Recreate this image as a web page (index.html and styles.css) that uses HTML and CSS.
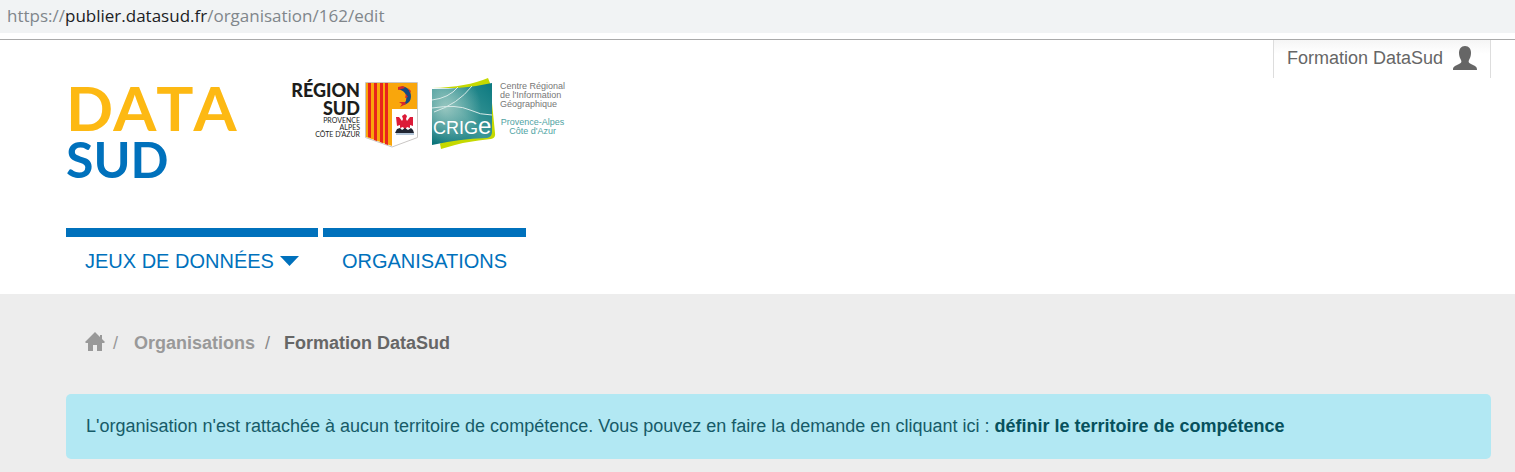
FILE: index.html
```html
<!DOCTYPE html>
<html lang="fr">
<head>
<meta charset="utf-8">
<meta name="viewport" content="width=device-width, initial-scale=1">
<title>Formation DataSud</title>
<link rel="stylesheet" href="styles.css">
</head>
<body>
<div class="address-bar"><span>https://</span><span class="address-host">publier.datasud.fr</span><span>/organisation/162/edit</span></div>
<header class="site-header">
  <div class="header-top">
    <div class="brands">
      <a class="datasud" href="#"><span class="datasud-data">DATA</span><span class="datasud-sud">SUD</span></a>
      <a class="region" href="#">
        <span class="region-text">
          <span class="region-name">RÉGION</span>
          <span class="region-name">SUD</span>
          <span class="region-place">PROVENCE</span>
          <span class="region-place">ALPES</span>
          <span class="region-place">CÔTE D'AZUR</span>
        </span>
        <svg class="shield" viewBox="0 0 53 66" width="53" height="66" aria-hidden="true">
          <path d="M.5.5h52v55L27 65 .5 55.500z" fill="#fff" stroke="#c9c6c4"/>
          <path d="M1 1h51v26H27v37L1 55z" fill="#f9a60c"/>
          <path d="M3 1h3v55l-3-1zM9 1h3v58l-3-1zM15 1h3v60l-3-1zM20 1h3v62l-3-1z" fill="#e8241c"/>
          <path d="M33 7c3-4 8-3 11 1 4 6 2 14-6 15 3-3 4-6 3-10-1-3-4-5-8-6z" fill="#154a83"/>
          <path d="M33 5l5-1 2 2-7 2zM43 6l3 3-1 2zM40 20l-6 0 3 2-2 3 6-3zM41 12l2 3-3 1z" fill="#d8292b"/>
          <path d="M31 35l3 0 3 4 1-2-1-3 3-2 2 2-1 3 1 2 3-4 3 0v9l-3-1 0 3-3-1-2 3-2-3-3 1 0-3-3 1z" fill="#dc1a37"/>
          <path d="M30 51l2-4 3-1 2 2 3-2 3 2 3-2 2 2 1 3z" fill="#202532"/>
          <path d="M31 52h18" stroke="#668bb0"/>
        </svg>
      </a>
      <a class="crige" href="#">
        <svg class="crige-mark" viewBox="0 0 66 72" width="66" height="72" aria-hidden="true">
          <defs>
            <linearGradient id="teal" x1="1" y1="0" x2="0" y2="1">
              <stop offset="0" stop-color="#0b7980"/><stop offset=".5" stop-color="#3d9797"/><stop offset="1" stop-color="#087278"/>
            </linearGradient>
            <radialGradient id="shine" cx=".22" cy=".4" r=".6">
              <stop offset="0" stop-color="#b8d8cf" stop-opacity=".75"/><stop offset="1" stop-color="#b8d8cf" stop-opacity="0"/>
            </radialGradient>
          </defs>
          <path d="M1 10Q36 9 57 0L59 5 64 55Q65 60 60 61 35 63 10 71L9 66 50 10z" fill="#c5d900"/>
          <path d="M1 11Q34 11 61 5V54Q61 59 56 60 27 61 1 67z" fill="url(#teal)"/>
          <path d="M1 11Q34 11 61 5V54Q61 59 56 60 27 61 1 67z" fill="url(#shine)"/>
          <path d="M1 22Q18 20 27 9M3 34Q27 26 41 8M1 30Q26 26 39 32 49 37 61 37" fill="none" stroke="#d7eae8" stroke-width="1"/>
          <text class="crige-name" x="2" y="56">CRIG<tspan class="crige-e">e</tspan></text>
        </svg>
        <span class="crige-text">
          <span>Centre Régional</span>
          <span>de l'Information</span>
          <span>Géographique</span>
          <span class="crige-place crige-first">Provence-Alpes</span>
          <span class="crige-place">Côte d'Azur</span>
        </span>
      </a>
    </div>
    <a class="account" href="#">Formation DataSud
      <svg viewBox="0 0 24 24" width="24" height="24" aria-hidden="true"><path d="M12 0C8 0 6 3 6 7c0 3 1 5 2 7 1 2 0 3-2 4l-4 2c-1 1-2 1-2 4h24c0-3-1-3-2-4l-4-2c-2-1-3-2-2-4 1-2 2-4 2-7 0-4-2-7-6-7z" fill="#666"/></svg>
    </a>
  </div>
  <nav class="main-nav">
    <button class="tab" type="button">JEUX DE DONNÉES <svg viewBox="0 0 19 10" width="19" height="10" aria-hidden="true"><path d="M0 0h19l-9.500 10z" fill="#0071bc"/></svg></button>
    <a class="tab" href="#">ORGANISATIONS</a>
  </nav>
</header>
<main class="content">
  <nav aria-label="Fil d'Ariane">
    <ol class="breadcrumb">
      <li><a class="home" href="#" aria-label="Accueil"><svg viewBox="0 0 20 19" width="20" height="19" aria-hidden="true"><path d="M10 0l5 5V3h2v4l3 3-1 1h-2v8h-5v-6H8v6H3v-8H1l-1-1z" fill="#999"/></svg></a></li>
      <li><a href="#">Organisations</a></li>
      <li class="current">Formation DataSud</li>
    </ol>
  </nav>
  <div class="alert">L'organisation n'est rattachée à aucun territoire de compétence. Vous pouvez en faire la demande en cliquant ici : <a href="#">définir le territoire de compétence</a></div>
</main>
</body>
</html>
```
FILE: styles.css
```css
* { box-sizing: border-box; }
body {
  margin: 0;
  min-height: 100vh;
  display: flex;
  flex-direction: column;
  background: #fff;
  color: #666;
  font: 18px/24px "Liberation Sans", Arial, sans-serif;
}
a { color: inherit; text-decoration: none; }
svg { flex: none; }
.address-bar {
  padding: 4px 7px 5px;
  background: #f1f3f4;
  color: #80868b;
  font-family: "Open Sans", "Noto Sans", sans-serif;
  font-size: 17px;
}
.address-host { color: #202124; }
.site-header {
  margin-top: 6px;
  padding: 0 24px 0 66px;
  border-top: 1px solid #aaa;
}
.header-top {
  display: flex;
  justify-content: space-between;
  align-items: flex-start;
  min-height: 188px;
}
.brands { display: flex; align-items: flex-start; padding-top: 38px; }
.datasud {
  display: flex;
  flex-direction: column;
  width: 224px;
  padding-top: 2px;
  font-family: Lato, sans-serif;
  font-weight: 700;
  font-kerning: none;
}
.datasud-data { color: #fdb913; font-size: 62px; line-height: 54px; }
.datasud-sud { color: #0071bc; font-size: 50px; line-height: 50px; }
.region { display: flex; gap: 5px; padding-top: 4px; color: #1d1d1b; }
.region-text {
  display: flex;
  flex-direction: column;
  align-items: flex-end;
  width: 70px;
  margin-top: -1px;
  font-family: Lato, sans-serif;
}
.region-name { font-size: 18px; line-height: 18px; font-weight: 900; }
.region-place { font-size: 7px; line-height: 7px; }
.crige { display: flex; gap: 3px; margin-left: 13px; }
.crige-name { fill: #fff; font: 18px "Liberation Sans", Arial, sans-serif; }
.crige-e { font-size: 24px; }
.crige-text {
  display: flex;
  flex-direction: column;
  padding-top: 4px;
  color: #777;
  font-size: 9px;
  line-height: 9px;
}
.crige-place { align-self: center; color: #50a3a3; }
.crige-first { margin-top: 9px; }
.account {
  display: flex;
  align-items: center;
  gap: 10px;
  min-height: 38px;
  padding: 0 13px 3px;
  border: solid #ddd;
  border-width: 0 1px;
  background: linear-gradient(#f5f5f5, #fff 14px);
}
.main-nav { display: flex; gap: 5px; }
.tab {
  display: flex;
  align-items: center;
  gap: 6px;
  min-height: 66px;
  padding: 0 19px 10px;
  border: 0 solid #0071bc;
  border-top-width: 9px;
  background: none;
  color: #0071bc;
  font: 20px/24px "Liberation Sans", Arial, sans-serif;
}
.content { flex: 1; padding: 37px 24px 13px 66px; background: #ededed; }
.breadcrumb {
  display: flex;
  margin: 0 0 38px;
  padding: 0 19px;
  list-style: none;
  color: #999;
  font-weight: 700;
  line-height: 25px;
}
.breadcrumb li { display: flex; align-items: center; }
.breadcrumb li + li::before { content: "/"; padding: 0 16px 0 12px; font-weight: 400; }
.breadcrumb li:nth-child(2)::before { padding-left: 8px; }
.home { display: flex; padding-bottom: 4px; }
.breadcrumb .current { color: #666; }
.breadcrumb .current::before { color: #888; padding: 0 14px 0 10px; }
.alert {
  padding: 20px;
  border-radius: 5px;
  background: #b2e8f3;
  color: #165b68;
  line-height: 25px;
}
.alert a { color: #06505d; font-weight: 700; }
```
